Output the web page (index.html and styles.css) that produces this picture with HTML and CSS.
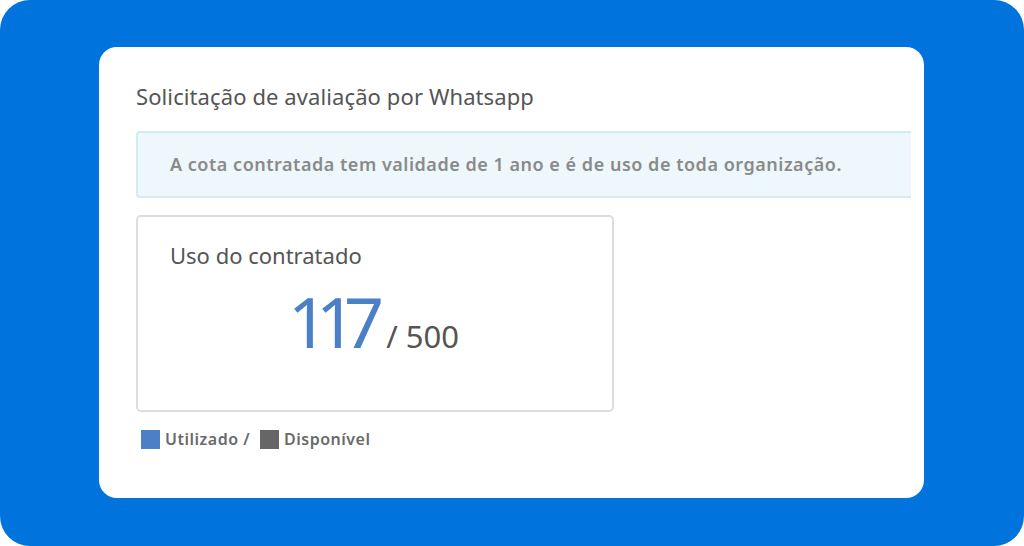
FILE: index.html
```html
<!DOCTYPE html>
<html lang="pt-BR">
<head>
<meta charset="utf-8">
<title>Solicitação de avaliação por Whatsapp</title>
<link rel="stylesheet" href="styles.css">
</head>
<body>
<div class="frame">
  <div class="card">
    <h1 class="title">Solicitação de avaliação por Whatsapp</h1>
    <div class="notice">A cota contratada tem validade de 1 ano e é de uso de toda organização.</div>
    <div class="usage">
      <div class="usage-label">Uso do contratado</div>
      <div class="usage-value"><span class="used">117</span><span class="total">/ 500</span></div>
    </div>
    <div class="legend">
      <span class="swatch swatch-used"></span><span class="legend-text">Utilizado /</span>
      <span class="swatch swatch-free"></span><span class="legend-text">Disponível</span>
    </div>
  </div>
</div>
</body>
</html>
```
FILE: styles.css
```css
html, body {
  margin: 0;
  padding: 0;
  background: #ffffff;
}
body {
  font-family: "Noto Sans", "DejaVu Sans", sans-serif;
}
.frame {
  width: 1024px;
  height: 546px;
  box-sizing: border-box;
  background: #0074dc;
  border-radius: 30px;
  padding: 47px 100px 48px 99px;
}
.card {
  height: 100%;
  box-sizing: border-box;
  background: #ffffff;
  border-radius: 18px;
  padding: 34px 13px 0 37px;
}
.title {
  margin: 0;
  font-size: 22px;
  font-weight: 400;
  line-height: 30px;
  letter-spacing: 0.1px;
  color: #555555;
}
.notice {
  margin-top: 20px;
  height: 67px;
  box-sizing: border-box;
  background: #eef7fc;
  border: 2px solid #d3ebf2;
  border-right: none;
  border-radius: 4px 0 0 4px;
  padding: 0 0 1px 32px;
  display: flex;
  align-items: center;
  font-size: 18px;
  font-weight: 600;
  letter-spacing: 0.52px;
  color: #8a8a8a;
}
.usage {
  margin-top: 17px;
  width: 478px;
  height: 197px;
  box-sizing: border-box;
  border: 2px solid #dddddd;
  border-radius: 5px;
  padding: 23px 0 0 32px;
}
.usage-label {
  font-size: 22px;
  line-height: 30px;
  color: #555555;
}
.usage-value {
  margin-top: 16px;
  display: flex;
  align-items: baseline;
  padding-left: 118px;
}
.used {
  font-size: 70px;
  line-height: 70px;
  color: #4b7fc6;
  letter-spacing: -12px;
}
.total {
  margin-left: 14px;
  font-size: 31px;
  color: #555555;
}
.legend {
  margin-top: 16px;
  display: flex;
  align-items: center;
  padding-left: 5px;
}
.swatch {
  width: 19px;
  height: 19px;
  margin-right: 5px;
}
.swatch-used { background: #4b7fc6; }
.swatch-free { background: #666666; margin-left: 10px; }
.legend-text {
  font-size: 16px;
  font-weight: 600;
  letter-spacing: 0.5px;
  color: #6a6a6a;
}
```
